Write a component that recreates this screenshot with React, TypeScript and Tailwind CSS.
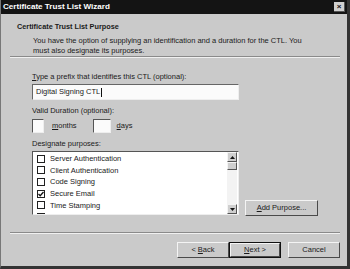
import React from "react";

const PURPOSES: { label: string; checked: boolean }[] = [
  { label: "Server Authentication", checked: false },
  { label: "Client Authentication", checked: false },
  { label: "Code Signing", checked: false },
  { label: "Secure Email", checked: true },
  { label: "Time Stamping", checked: false },
  { label: "Microsoft Trust List Signing", checked: false }
];

function Check({ checked }: { checked: boolean }) {
  return (
    <span className="w-[8px] h-[8px] shrink-0 border border-[#202020] bg-white flex items-center justify-center">
      {checked && (
        <svg width="6" height="6" viewBox="0 0 6 6">
          <path d="M0.5 3 L2.2 4.8 L5.5 1" fill="none" stroke="#111" strokeWidth="1.3" />
        </svg>
      )}
    </span>
  );
}

function Arrow({ up }: { up: boolean }) {
  return (
    <div className="w-[10px] h-[10px] bg-[#cfcfcf] border-t border-l border-t-[#f4f4f4] border-l-[#f4f4f4] border-b border-r border-b-[#555] border-r-[#555] flex items-center justify-center">
      <svg width="5" height="3" viewBox="0 0 5 3">
        <path d={up ? "M0 3 L2.5 0 L5 3 Z" : "M0 0 L2.5 3 L5 0 Z"} fill="#111" />
      </svg>
    </div>
  );
}

function Btn({ children, primary }: { children: React.ReactNode; primary?: boolean }) {
  return (
    <div className={"h-[16px] w-[52px] " + (primary ? "border border-[#111]" : "")}>
      <div className="h-full w-full bg-[#cacaca] border-t border-l border-t-[#f4f4f4] border-l-[#f4f4f4] border-b border-r border-b-[#4a4a4a] border-r-[#4a4a4a] flex items-center justify-center">
        {children}
      </div>
    </div>
  );
}

export default function App() {
  return (
    <div className="w-[350px] h-[269px] bg-[#cacaca] text-[#1a1a1a] text-[7.5px] font-['Liberation_Sans',Arial,sans-serif] flex flex-col border-l border-l-[#777] border-r-[3px] border-r-[#333] border-b-[3px] border-b-[#333] overflow-hidden">
      {/* title bar */}
      <div className="h-[14px] shrink-0 bg-[#141414] flex items-center justify-between pl-[2px] pr-[2px]">
        <span className="text-white font-bold text-[8.1px]">Certificate Trust List Wizard</span>
        <div className="w-[11px] h-[10px] bg-[#d0d0d0] border-b border-r border-[#555] flex items-center justify-center text-[#111] text-[8px] leading-none font-bold">
          ×
        </div>
      </div>

      {/* header */}
      <div className="h-[42px] shrink-0 pt-[8px] pl-[16px]">
        <div className="font-bold leading-[9px] text-[7.3px]">Certificate Trust List Purpose</div>
        <div className="pl-[16px] mt-[5px] leading-[10px]">
          You have the option of supplying an identification and a duration for the CTL. You
          <br />
          must also designate its purposes.
        </div>
      </div>
      <div className="ml-[9px] mr-[7px] h-[2px] border-t border-t-[#8a8a8a] border-b border-b-[#f0f0f0]" />

      {/* body */}
      <div className="pl-[31px] pt-[14px] flex flex-col">
        <div className="leading-[10px]">
          <span className="underline">T</span>ype a prefix that identifies this CTL (optional):
        </div>
        <div className="mt-[2px] w-[207px] h-[16px] bg-[#fbfbfb] border-t border-l border-t-[#666] border-l-[#666] border-b border-r border-b-[#eee] border-r-[#eee] flex items-center pl-[3px]">
          <span>Digital Signing CTL</span>
          <span className="w-px h-[9px] bg-[#111] ml-px" />
        </div>

        <div className="mt-[6px] leading-[10px]">Valid Duration (optional):</div>
        <div className="mt-[3px] flex items-center">
          <div className="w-[12px] h-[14px] bg-[#fbfbfb] border-t border-l border-t-[#555] border-l-[#555] border-b border-r border-b-[#eee] border-r-[#eee]" />
          <span className="ml-[8px]">
            <span className="underline">m</span>onths
          </span>
          <div className="ml-[16px] w-[18px] h-[14px] bg-[#fbfbfb] border-t border-l border-t-[#555] border-l-[#555] border-b border-r border-b-[#eee] border-r-[#eee]" />
          <span className="ml-[6px]">
            <span className="underline">d</span>ays
          </span>
        </div>

        <div className="mt-[6px] leading-[10px]">
          Desi<span className="underline">g</span>nate purposes:
        </div>
        <div className="mt-[2px] flex items-end">
          <div className="w-[207px] h-[64px] bg-white border-t border-l border-t-[#555] border-l-[#555] border-b border-r border-b-[#eee] border-r-[#eee] flex overflow-hidden">
            <div className="flex-1 pl-[4px] pt-[1px] overflow-hidden">
              {PURPOSES.map((p) => (
                <div key={p.label} className="h-[11.6px] flex items-center gap-[5px] whitespace-nowrap">
                  <Check checked={p.checked} />
                  <span>{p.label}</span>
                </div>
              ))}
            </div>
            <div className="w-[10px] flex flex-col bg-[#f3f3f3] mr-px">
              <Arrow up />
              <div className="w-[10px] h-[8px] bg-[#cfcfcf] border-t border-l border-t-[#f4f4f4] border-l-[#f4f4f4] border-b border-r border-b-[#555] border-r-[#555]" />
              <div className="flex-1" />
              <Arrow up={false} />
            </div>
          </div>
          <div className="ml-[6px] mb-[-1px] h-[16px] w-[73px] bg-[#cacaca] border-t border-l border-t-[#f4f4f4] border-l-[#f4f4f4] border-b border-r border-b-[#4a4a4a] border-r-[#4a4a4a] flex items-center justify-center">
            <span>
              <span className="underline">A</span>dd Purpose...
            </span>
          </div>
        </div>
      </div>

      <div className="mt-[17px] ml-[9px] mr-[7px] h-[2px] border-t border-t-[#8a8a8a] border-b border-b-[#f0f0f0]" />

      {/* footer buttons */}
      <div className="mt-[8px] flex justify-end pr-[7px]">
        <Btn>
          &lt; <span className="underline ml-[2px]">B</span>ack
        </Btn>
        <Btn primary>
          <span className="underline">N</span>ext &gt;
        </Btn>
        <div className="ml-[7px]">
          <Btn>Cancel</Btn>
        </div>
      </div>
    </div>
  );
}
